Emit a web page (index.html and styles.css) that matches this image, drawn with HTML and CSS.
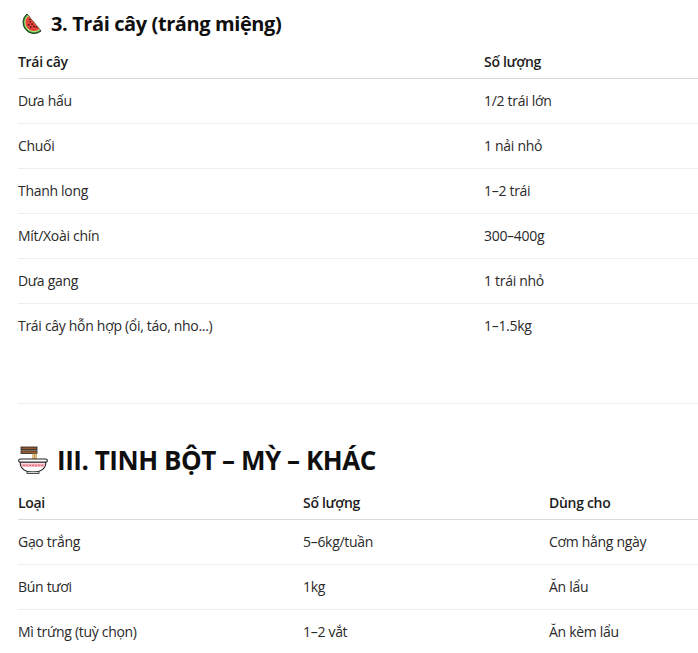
FILE: index.html
```html
<!DOCTYPE html>
<html lang="vi">
<head>
<meta charset="utf-8">
<title>Danh sách thực phẩm</title>
<link rel="stylesheet" href="styles.css">
</head>
<body>
<main class="page">
  <h3 class="sec-title sec-small">
    <svg class="ico ico-melon" viewBox="0 0 24 24" aria-hidden="true">
      <path d="M9,2 A11,11 0 0 0 23,19 Z" fill="#2f8a34" stroke="#1d3b1f" stroke-width="1" stroke-linejoin="round"/>
      <path d="M9.83,3 A9.7,9.7 0 0 0 22.17,18 Z" fill="#b5e07a"/>
      <path d="M10.6,3.93 A8.5,8.5 0 0 0 21.4,17.07 Z" fill="#e8413a"/>
      <g fill="#1a1a1a">
        <circle cx="12.16" cy="9.77" r="0.8"/>
        <circle cx="14.07" cy="12.09" r="0.8"/>
        <circle cx="15.98" cy="14.41" r="0.8"/>
        <circle cx="10.8" cy="12.84" r="0.8"/>
        <circle cx="12.7" cy="15.16" r="0.8"/>
        <circle cx="18.41" cy="15.01" r="0.8"/>
        <circle cx="12.05" cy="7.27" r="0.8"/>
      </g>
    </svg>
    <span>3. Trái cây (tráng miệng)</span>
  </h3>
  <table class="tbl tbl-fruit">
    <colgroup><col class="c-fruit1"><col></colgroup>
    <thead>
      <tr><th>Trái cây</th><th>Số lượng</th></tr>
    </thead>
    <tbody>
      <tr><td>Dưa hấu</td><td>1/2 trái lớn</td></tr>
      <tr><td>Chuối</td><td>1 nải nhỏ</td></tr>
      <tr><td>Thanh long</td><td>1–2 trái</td></tr>
      <tr><td>Mít/Xoài chín</td><td>300–400g</td></tr>
      <tr><td>Dưa gang</td><td>1 trái nhỏ</td></tr>
      <tr><td>Trái cây hỗn hợp (ổi, táo, nho...)</td><td>1–1.5kg</td></tr>
    </tbody>
  </table>
  <hr class="divider">
  <h2 class="sec-title sec-big">
    <svg class="ico ico-bowl" viewBox="0 0 30 28" aria-hidden="true">
      <rect x="3" y="1" width="16" height="2.6" fill="#9b5a2e" stroke="#222" stroke-width="0.8"/>
      <rect x="3" y="4.8" width="16" height="2.6" fill="#9b5a2e" stroke="#222" stroke-width="0.8"/>
      <path d="M15,7.4 V13 M16.6,7.4 V13 M18.2,7.4 V13" stroke="#c99a4a" stroke-width="1.2"/>
      <rect x="0.7" y="13" width="28.6" height="3.2" rx="1.5" fill="#fff" stroke="#222" stroke-width="1.1"/>
      <path d="M2.2,16.2 H27.8 C27.8,23 22,26.5 15,26.5 C8,26.5 2.2,23 2.2,16.2 Z" fill="#fff" stroke="#222" stroke-width="1.1"/>
      <path d="M2.8,17.5 H27.2 C26.9,19.3 26.4,20.3 25.8,21 H4.2 C3.6,20.3 3.1,19.3 2.8,17.5 Z" fill="#f6b3c0"/>
      <g fill="#d3304a">
        <circle cx="6" cy="19.2" r="0.6"/><circle cx="9" cy="19.2" r="0.6"/>
        <circle cx="12" cy="19.2" r="0.6"/><circle cx="15" cy="19.2" r="0.6"/>
        <circle cx="18" cy="19.2" r="0.6"/><circle cx="21" cy="19.2" r="0.6"/>
        <circle cx="24" cy="19.2" r="0.6"/>
      </g>
      <rect x="9" y="25.8" width="12" height="1.6" fill="#fff" stroke="#222" stroke-width="0.8"/>
    </svg>
    <span>III. TINH BỘT – MỲ – KHÁC</span>
  </h2>
  <table class="tbl tbl-starch">
    <colgroup><col class="c-starch1"><col class="c-starch2"><col></colgroup>
    <thead>
      <tr><th>Loại</th><th>Số lượng</th><th>Dùng cho</th></tr>
    </thead>
    <tbody>
      <tr><td>Gạo trắng</td><td>5–6kg/tuần</td><td>Cơm hằng ngày</td></tr>
      <tr><td>Bún tươi</td><td>1kg</td><td>Ăn lẩu</td></tr>
      <tr><td>Mì trứng (tuỳ chọn)</td><td>1–2 vắt</td><td>Ăn kèm lẩu</td></tr>
    </tbody>
  </table>
</main>
</body>
</html>
```
FILE: styles.css
```css
html, body {
  margin: 0;
  padding: 0;
  background: #ffffff;
  overflow: hidden;
}

.page {
  width: 680px;
  padding: 10px 0 0 18px;
  font-family: "Open Sans", "Noto Sans", sans-serif;
  color: #2a2a2a;
}

.sec-title {
  display: flex;
  align-items: center;
  gap: 9px;
  margin: 0;
  font-weight: 700;
  color: #0f0f0f;
}

.sec-small {
  font-size: 20px;
  line-height: 28px;
  letter-spacing: -0.4px;
}

.sec-big {
  font-size: 26px;
  line-height: 34px;
  letter-spacing: -0.45px;
}

.ico-melon {
  width: 24px;
  height: 24px;
  flex: none;
}

.ico-bowl {
  width: 30px;
  height: 28px;
  flex: none;
}

.tbl {
  width: 680px;
  table-layout: fixed;
  border-collapse: collapse;
  font-size: 14px;
  line-height: 20px;
  letter-spacing: -0.3px;
}

.tbl-fruit {
  margin-top: 6px;
}

.tbl-starch {
  margin-top: 8px;
}

.c-fruit1 { width: 466px; }
.c-starch1 { width: 285px; }
.c-starch2 { width: 246px; }

.tbl th {
  text-align: left;
  font-weight: 600;
  color: #1c1c1c;
  padding: 8px 0 6px 0;
  border-bottom: 1px solid #d9d9d9;
}

.tbl td {
  padding: 12px 0;
  border-bottom: 1px solid #eeeeee;
  white-space: nowrap;
}

.tbl tbody tr:last-child td {
  border-bottom: none;
}

.divider {
  border: 0;
  border-top: 1px solid #eeeeee;
  margin: 55px 0 39px 0;
  width: 680px;
}
```
